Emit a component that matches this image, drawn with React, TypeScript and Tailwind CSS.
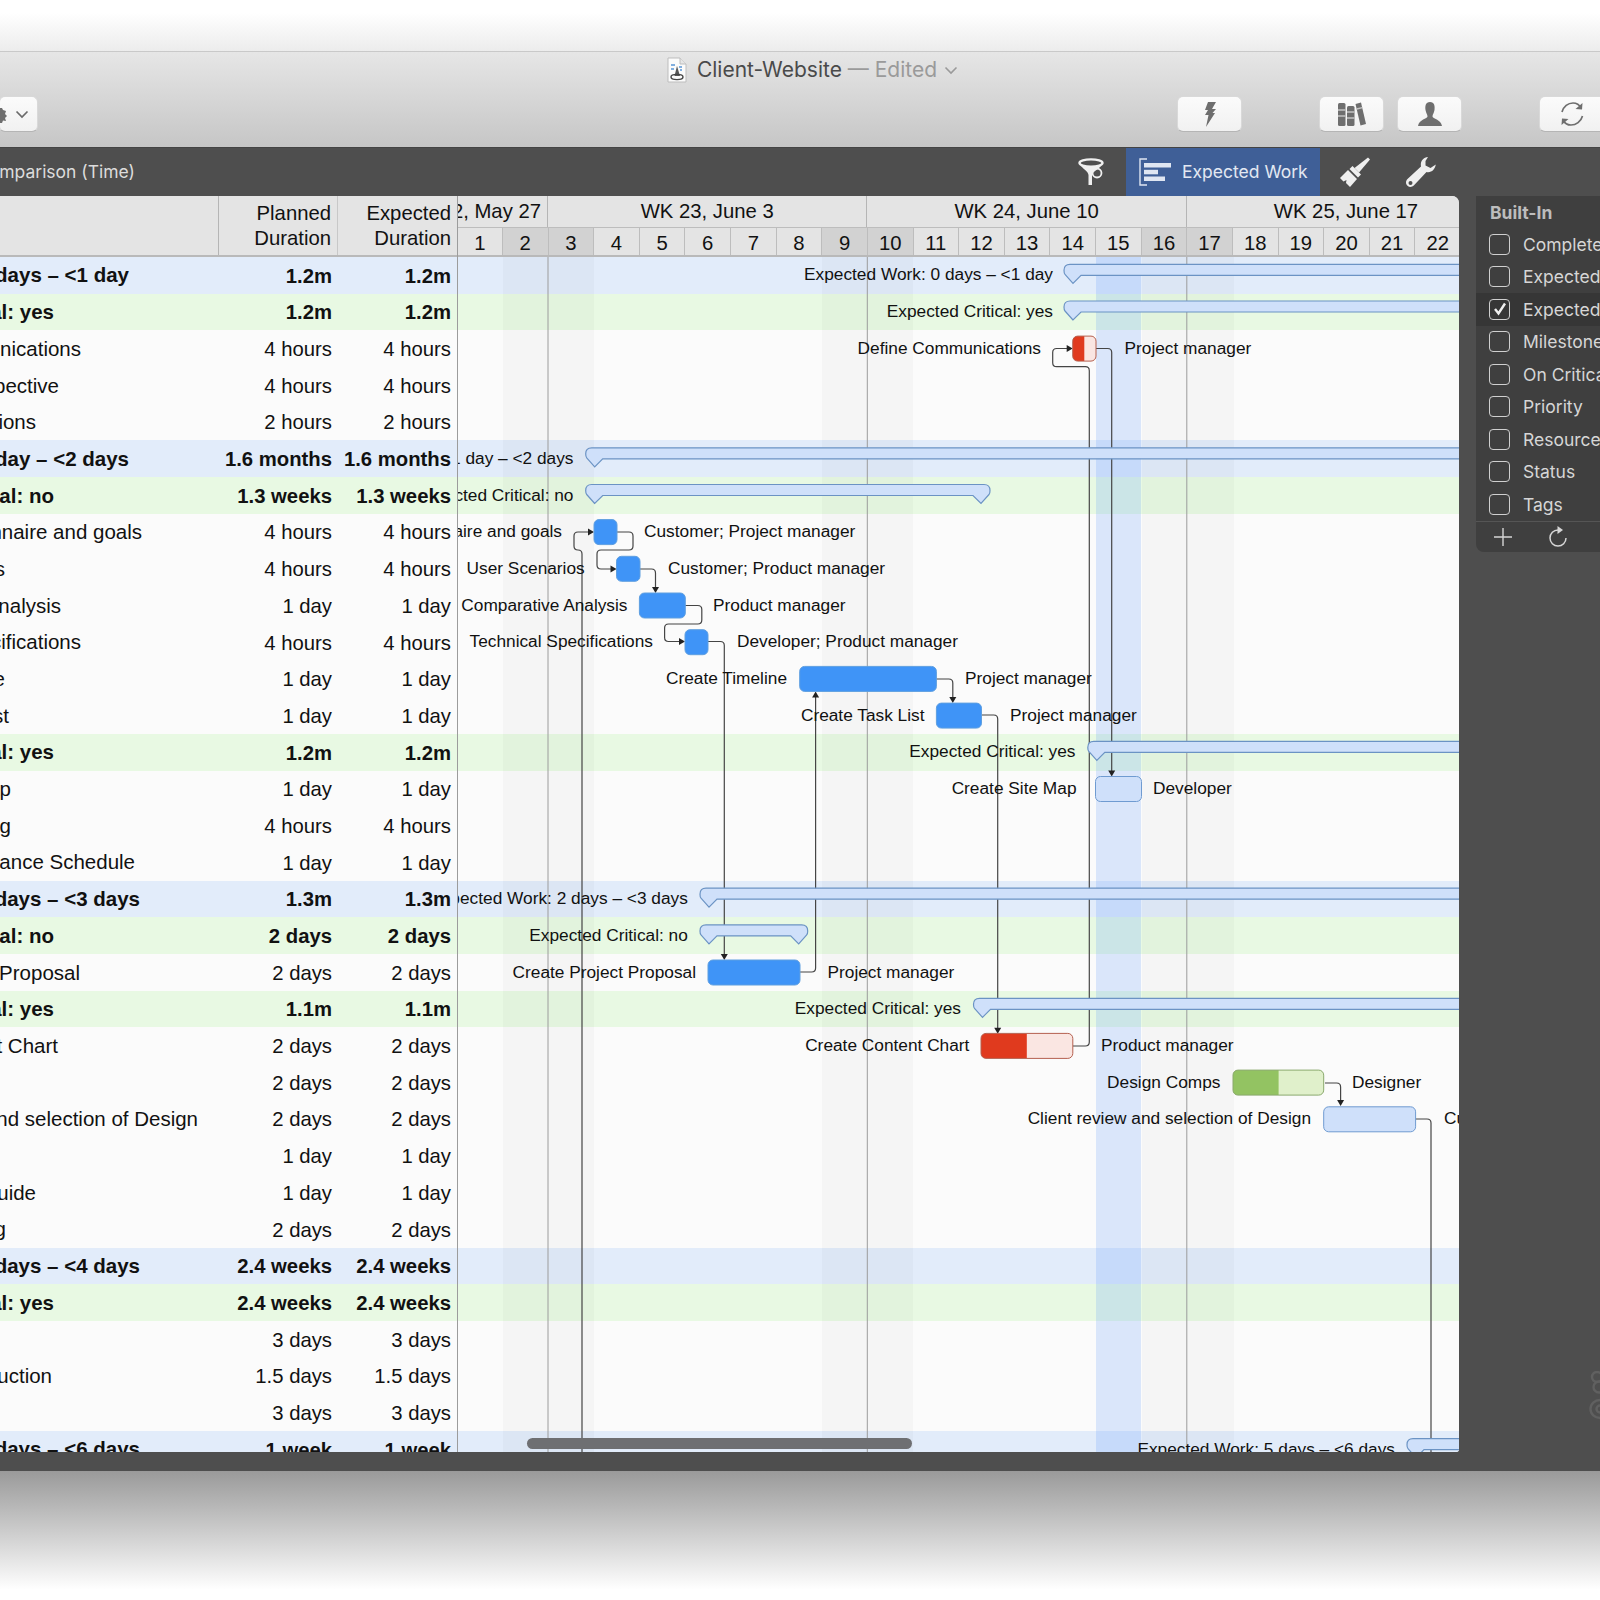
import React from "react";

type Kind = "blue" | "green" | "white";
type Row = { name: string; end: number; dur: string; kind: Kind };

const rows: Row[] = [
  { name: "Expected Work: 0 days – <1 day", end: 129, dur: "1.2m", kind: "blue" },
  { name: "Expected Critical: yes", end: 54, dur: "1.2m", kind: "green" },
  { name: "Define Communications", end: 81, dur: "4 hours", kind: "white" },
  { name: "Client Perspective", end: 59, dur: "4 hours", kind: "white" },
  { name: "Create Definitions", end: 36, dur: "2 hours", kind: "white" },
  { name: "Expected Work: 1 day – <2 days", end: 129, dur: "1.6 months", kind: "blue" },
  { name: "Expected Critical: no", end: 54, dur: "1.3 weeks", kind: "green" },
  { name: "Customer Questionnaire and goals", end: 142, dur: "4 hours", kind: "white" },
  { name: "User Scenarios", end: 5, dur: "4 hours", kind: "white" },
  { name: "Comparative Analysis", end: 61, dur: "1 day", kind: "white" },
  { name: "Technical Specifications", end: 81, dur: "4 hours", kind: "white" },
  { name: "Create Timeline", end: 5, dur: "1 day", kind: "white" },
  { name: "Create Task List", end: 9, dur: "1 day", kind: "white" },
  { name: "Expected Critical: yes", end: 54, dur: "1.2m", kind: "green" },
  { name: "Create Site Map", end: 11, dur: "1 day", kind: "white" },
  { name: "Kickoff Meeting", end: 11, dur: "4 hours", kind: "white" },
  { name: "Create Maintenance Schedule", end: 135, dur: "1 day", kind: "white" },
  { name: "Expected Work: 2 days – <3 days", end: 140, dur: "1.3m", kind: "blue" },
  { name: "Expected Critical: no", end: 54, dur: "2 days", kind: "green" },
  { name: "Create Project Proposal", end: 80, dur: "2 days", kind: "white" },
  { name: "Expected Critical: yes", end: 54, dur: "1.1m", kind: "green" },
  { name: "Create Content Chart", end: 58, dur: "2 days", kind: "white" },
  { name: "", end: 0, dur: "2 days", kind: "white" },
  { name: "Client review and selection of Design", end: 198, dur: "2 days", kind: "white" },
  { name: "", end: 0, dur: "1 day", kind: "white" },
  { name: "Create Style Guide", end: 36, dur: "1 day", kind: "white" },
  { name: "Design Testing", end: 6, dur: "2 days", kind: "white" },
  { name: "Expected Work: 3 days – <4 days", end: 140, dur: "2.4 weeks", kind: "blue" },
  { name: "Expected Critical: yes", end: 54, dur: "2.4 weeks", kind: "green" },
  { name: "", end: 0, dur: "3 days", kind: "white" },
  { name: "Content Production", end: 52, dur: "1.5 days", kind: "white" },
  { name: "", end: 0, dur: "3 days", kind: "white" },
  { name: "Expected Work: 5 days – <6 days", end: 140, dur: "1 week", kind: "blue" },
];

const ROW = 36.7;
const TOP = 257;
const LEFT = 458;
const RIGHT = 1459;
const DAY = 45.63;
const dayX = (n: number) => 548 + (n - 3) * DAY;
const rowBg: Record<Kind, string> = {
  blue: "bg-[#e2ecfa]",
  green: "bg-[#e8f9e3]",
  white: "bg-[#fbfbfb]",
};

const labels: [number, "l" | "r", number, string][] = [
  [0, "r", 1053, "Expected Work: 0 days – <1 day"],
  [1, "r", 1053, "Expected Critical: yes"],
  [2, "r", 1041, "Define Communications"],
  [2, "l", 1124.5, "Project manager"],
  [5, "r", 573.5, "Expected Work: 1 day – <2 days"],
  [6, "r", 573.5, "Expected Critical: no"],
  [7, "r", 562, "Customer Questionnaire and goals"],
  [7, "l", 644, "Customer; Project manager"],
  [8, "r", 584.7, "User Scenarios"],
  [8, "l", 668, "Customer; Product manager"],
  [9, "r", 627.5, "Comparative Analysis"],
  [9, "l", 713, "Product manager"],
  [10, "r", 653, "Technical Specifications"],
  [10, "l", 737, "Developer; Product manager"],
  [11, "r", 787, "Create Timeline"],
  [11, "l", 965, "Project manager"],
  [12, "r", 924.5, "Create Task List"],
  [12, "l", 1010, "Project manager"],
  [13, "r", 1075.5, "Expected Critical: yes"],
  [14, "r", 1076.5, "Create Site Map"],
  [14, "l", 1153, "Developer"],
  [17, "r", 687.8, "Expected Work: 2 days – <3 days"],
  [18, "r", 687.8, "Expected Critical: no"],
  [19, "r", 696, "Create Project Proposal"],
  [19, "l", 827.5, "Project manager"],
  [20, "r", 961, "Expected Critical: yes"],
  [21, "r", 969.4, "Create Content Chart"],
  [21, "l", 1101, "Product manager"],
  [22, "r", 1220.4, "Design Comps"],
  [22, "l", 1352, "Designer"],
  [23, "r", 1311, "Client review and selection of Design"],
  [23, "l", 1444, "Customer"],
  [32, "r", 1395, "Expected Work: 5 days – <6 days"],
];

type Pt = [number, number];
function rounded(pts: Pt[], r = 4) {
  let d = `M${pts[0][0]} ${pts[0][1]}`;
  for (let i = 1; i < pts.length - 1; i++) {
    const [x, y] = pts[i];
    const [px, py] = pts[i - 1];
    const [nx, ny] = pts[i + 1];
    const a = Math.hypot(px - x, py - y);
    const b = Math.hypot(nx - x, ny - y);
    const ra = Math.min(r, a / 2);
    const rb = Math.min(r, b / 2);
    d += ` L${x + ((px - x) / a) * ra} ${y + ((py - y) / a) * ra}`;
    d += ` Q${x} ${y} ${x + ((nx - x) / b) * rb} ${y + ((ny - y) / b) * rb}`;
  }
  const l = pts[pts.length - 1];
  return d + ` L${l[0]} ${l[1]}`;
}

const lines: { pts: Pt[]; tip?: [number, number, "d" | "r" | "u"] }[] = [
  { pts: [[1096, 348.5], [1111.7, 348.5], [1111.7, 771]], tip: [1111.7, 776.5, "d"] },
  { pts: [[1073, 1046], [1089.3, 1046], [1089.3, 366.7], [1052.7, 366.7], [1052.7, 348.5], [1067, 348.5]], tip: [1072.7, 348.5, "r"] },
  { pts: [[617, 532], [633, 532], [633, 550], [597, 550], [597, 569], [611, 569]], tip: [616.5, 569, "r"] },
  { pts: [[640, 569], [655.5, 569], [655.5, 588]], tip: [655.5, 593, "d"] },
  { pts: [[685, 605.5], [701.8, 605.5], [701.8, 624], [664.6, 624], [664.6, 641.5], [680, 641.5]], tip: [685, 641.5, "r"] },
  { pts: [[708, 641.5], [724.3, 641.5], [724.3, 955]], tip: [724.3, 960, "d"] },
  { pts: [[800, 972], [815.6, 972], [815.6, 697]], tip: [815.6, 691.5, "u"] },
  { pts: [[936, 679], [952.8, 679], [952.8, 698]], tip: [952.8, 703, "d"] },
  { pts: [[981.5, 715], [997.7, 715], [997.7, 1029]], tip: [997.7, 1033.7, "d"] },
  { pts: [[1325, 1083], [1340.6, 1083], [1340.6, 1101]], tip: [1340.6, 1106, "d"] },
  { pts: [[1415.6, 1119], [1431, 1119], [1431, 1460]] },
  { pts: [[582, 1460], [582, 550], [574, 550], [574, 532], [589, 532]], tip: [594, 532, "r"] },
];

function tipPath([x, y, dir]: [number, number, "d" | "r" | "u"]) {
  if (dir === "d") return `M${x} ${y} L${x - 3.5} ${y - 6} L${x + 3.5} ${y - 6} Z`;
  if (dir === "u") return `M${x} ${y} L${x - 3.5} ${y + 6} L${x + 3.5} ${y + 6} Z`;
  return `M${x} ${y} L${x - 6} ${y - 3.5} L${x - 6} ${y + 3.5} Z`;
}

const summaries: [number, number, number | null][] = [
  [0, 1064, null],
  [1, 1064, null],
  [5, 585.7, null],
  [6, 585.7, 990],
  [13, 1087.8, null],
  [17, 700, null],
  [18, 700, 807.7],
  [20, 973.5, null],
  [32, 1407, null],
];

function summaryPath(row: number, x0: number, x1: number | null) {
  const t = TOP + row * ROW + 7.3;
  const b = t + 11;
  const tip = t + 19;
  let d = `M${x0 + 9} ${tip} L${x0 + 1} ${b - 1} Q${x0} ${b - 2} ${x0} ${t + 6} Q${x0} ${t} ${x0 + 6} ${t}`;
  if (x1 === null) {
    d += ` L1480 ${t} L1480 ${b} L${x0 + 17} ${b} Z`;
  } else {
    d += ` L${x1 - 6} ${t} Q${x1} ${t} ${x1} ${t + 6} Q${x1} ${b - 2} ${x1 - 1} ${b - 1} L${x1 - 9} ${tip} L${x1 - 17} ${b} L${x0 + 17} ${b} Z`;
  }
  return d;
}

const blue = { fill: "#3f94f7", stroke: "#5f9fe0" };
const pale = { fill: "#cfe0fa", stroke: "#6f9bd1" };
const red = { fill: "#fae6e2", dark: "#e03a1e", stroke: "#b5604f" };
const green = { fill: "#e0f0cb", dark: "#93c362", stroke: "#8aa96d" };

const bars: { row: number; x0: number; x1: number; split?: number; c: { fill: string; stroke: string; dark?: string } }[] = [
  { row: 2, x0: 1072.7, x1: 1096, split: 1084.3, c: red },
  { row: 7, x0: 594, x1: 617, c: blue },
  { row: 8, x0: 616.5, x1: 640, c: blue },
  { row: 9, x0: 639.4, x1: 685.3, c: blue },
  { row: 10, x0: 685, x1: 708, c: blue },
  { row: 11, x0: 799.7, x1: 936.4, c: blue },
  { row: 12, x0: 936.4, x1: 981.5, c: blue },
  { row: 14, x0: 1095.5, x1: 1141.5, c: pale },
  { row: 19, x0: 708, x1: 800, c: blue },
  { row: 21, x0: 981, x1: 1072.8, split: 1026.8, c: red },
  { row: 22, x0: 1233, x1: 1323.7, split: 1278.6, c: green },
  { row: 23, x0: 1323.7, x1: 1415.6, c: pale },
];

const weekends = [
  [503, 594],
  [822, 913],
  [1141.8, 1233.7],
];
const shaded = new Set([2, 3, 9, 10, 16, 17]);
const days = Array.from({ length: 22 }, (_, i) => i + 1);
const panelItems = ["Completed", "Expected Work", "Expected Critical", "Milestone", "On Critical Path", "Priority", "Resource", "Status", "Tags"];

function ToolButton({ className, children }: { className: string; children?: React.ReactNode }) {
  return (
    <div className={`h-[36px] shrink-0 rounded-[6px] bg-linear-to-b from-[#fbfbfb] to-[#f1f1f1] border border-[#d9d9d9] border-b-[#b5b5b5] flex items-center justify-center ${className}`}>
      {children}
    </div>
  );
}

function GanttOverlay() {
  return (
    <svg className="absolute inset-0" width={RIGHT - LEFT} height={1452 - TOP} viewBox={`${LEFT} ${TOP} ${RIGHT - LEFT} ${1452 - TOP}`}>
      <defs>
        {bars.map((b, i) => (
          <clipPath key={i} id={`bar${i}`}>
            <rect x={b.x0} y={TOP + b.row * ROW + 5.7} width={b.x1 - b.x0} height={25} rx={5} />
          </clipPath>
        ))}
      </defs>
      {[548, 867.3, 1186.8].map((x) => (
        <line key={x} x1={x} x2={x} y1={TOP} y2={1452} stroke="#9c9c9c" strokeWidth={1} />
      ))}
      {lines.map((l, i) => (
        <g key={i}>
          <path d={rounded(l.pts)} fill="none" stroke="#454545" strokeWidth={1.2} />
          {l.tip && <path d={tipPath(l.tip)} fill="#222" />}
        </g>
      ))}
      {summaries.map(([r, a, b], i) => (
        <path key={i} d={summaryPath(r, a, b)} fill="#cfe0fa" stroke="#6b93c4" strokeWidth={1.2} />
      ))}
      {bars.map((b, i) => {
        const y = TOP + b.row * ROW + 5.7;
        return (
          <g key={i}>
            <rect x={b.x0} y={y} width={b.x1 - b.x0} height={25} rx={5} fill={b.c.fill} />
            {b.split && b.c.dark && <rect x={b.x0} y={y} width={b.split - b.x0} height={25} fill={b.c.dark} clipPath={`url(#bar${i})`} />}
            <rect x={b.x0} y={y} width={b.x1 - b.x0} height={25} rx={5} fill="none" stroke={b.c.stroke} strokeWidth={1} />
          </g>
        );
      })}
    </svg>
  );
}

export default function App() {
  return (
    <div className="w-[1600px] h-[1600px] overflow-hidden flex flex-col bg-white font-['Liberation_Sans',sans-serif]">
      <div className="h-[51px] shrink-0 bg-linear-to-b from-white from-[25%] to-[#ececec]" />

      <div className="h-[96px] shrink-0 border-t border-[#c9c9c9] bg-linear-to-b from-[#e6e6e6] to-[#c6c6c6] flex flex-col">
        <div className="h-[44px] shrink-0 flex items-center justify-center pl-[25px] pb-[8px] font-['Inter',sans-serif] text-[21px] text-[#4a4a4a] gap-[10px]">
          <svg width="20" height="26" viewBox="0 0 20 26">
            <path d="M1 1 H13 L19 7 V25 H1 Z" fill="#fbfbfb" stroke="#bdbdbd" />
            <path d="M13 1 V7 H19" fill="#e6e6e6" stroke="#bdbdbd" />
            <path d="M4 8 h4 M12 10 h3 M4 12 h3 M13 13 h2" stroke="#5a97d6" strokeWidth="1.5" />
            <path d="M10 9 L7.5 19 H13 Z" fill="#555" />
            <ellipse cx="10" cy="20" rx="6" ry="2.6" fill="none" stroke="#444" strokeWidth="1.4" />
          </svg>
          <div className="flex items-center gap-[7px]">
            <span>
              Client-Website <span className="text-[#9a9a9a]">— Edited</span>
            </span>
            <svg width="14" height="9" viewBox="0 0 14 9">
              <path d="M1.5 1.5 L7 7 L12.5 1.5" fill="none" stroke="#9a9a9a" strokeWidth="1.6" />
            </svg>
          </div>
        </div>
        <div className="flex">
          <ToolButton className="w-[39px] -ml-px justify-end pr-[8px] gap-[10px] relative">
            <svg className="absolute left-0 top-[11px]" width="8" height="15" viewBox="0 0 8 15">
              <path d="M0 0 H2 L3 2 L6 3 L5 6 L7 8 L5 10 L6 13 L3 12.5 L2 15 H0 Z" fill="#6e6e6e" />
            </svg>
            <svg width="14" height="9" viewBox="0 0 14 9">
              <path d="M1.5 1.5 L7 7 L12.5 1.5" fill="none" stroke="#6a6a6a" strokeWidth="1.7" />
            </svg>
          </ToolButton>
          <ToolButton className="w-[65px] ml-[1139px]">
            <svg width="14" height="25" viewBox="0 0 14 25">
              <path d="M5 0 H13 L9 7 H13 L9.5 11 H12 L3 25 L5.5 13 H2 L5 8 H2 Z" fill="#6e6e6e" />
            </svg>
          </ToolButton>
          <ToolButton className="w-[65px] ml-[77px]">
            <svg width="28" height="24" viewBox="0 0 28 24">
              <rect x="0" y="1" width="7.5" height="23" rx="1.5" fill="#6e6e6e" />
              <rect x="9" y="4" width="7.5" height="20" rx="1.5" fill="#6e6e6e" />
              <path d="M17.5 2 L23 0.5 L28 22 L22.5 23.5 Z" fill="#6e6e6e" />
              <path d="M0 8 h7.5 M0 14 h7.5 M9 10 h7.5 M9 16 h7.5 M18.7 7 l5.6 -1.4" stroke="#c4c4c4" strokeWidth="1.4" />
            </svg>
          </ToolButton>
          <ToolButton className="w-[65px] ml-[13px]">
            <svg width="24" height="24" viewBox="0 0 24 24">
              <path d="M12 0 C7.5 0 7 4 7.5 8 C8 11 9.5 12.5 9.5 14.5 C9.5 16.5 1 17.5 0 24 H24 C23 17.5 14.5 16.5 14.5 14.5 C14.5 12.5 16 11 16.5 8 C17 4 16.5 0 12 0 Z" fill="#6e6e6e" />
            </svg>
          </ToolButton>
          <ToolButton className="w-[70px] ml-[77px] justify-start pl-[20px]">
            <svg width="24" height="24" viewBox="0 0 24 24" fill="none" stroke="#6e6e6e" strokeWidth="1.7">
              <path d="M2 10 C3.5 4.5 8 1 13 1 C16.5 1 19.5 3 21 6" />
              <path d="M22.5 14 C21 19.5 16 23 11 23 C7.5 23 4.5 21 3 18" />
              <path d="M22.5 1 L22 7.5 L15.5 7" fill="#6e6e6e" stroke="none" />
              <path d="M1.5 23 L2 16.5 L8.5 17" fill="#6e6e6e" stroke="none" />
            </svg>
          </ToolButton>
        </div>
      </div>

      <div className="h-[49px] shrink-0 bg-[#4e4e4e] border-t border-[#444] flex items-center font-['Inter',sans-serif] text-[17.5px]">
        <div className="w-[135px] shrink-0 flex justify-end whitespace-nowrap text-[#dcdcdc]">
          <span className="shrink-0">Earned Value Comparison (Time)</span>
        </div>
        <svg className="ml-[943px] shrink-0" width="26" height="28" viewBox="0 0 26 28" fill="none">
          <ellipse cx="13" cy="5" rx="11.5" ry="3.6" stroke="#efefef" strokeWidth="2.4" />
          <path d="M3 8 C6 12 10 13 10.5 17 L10.5 27 L14 27 L14 17 C15 13 20 12 23 8 Z" fill="#efefef" />
          <circle cx="19" cy="15" r="4.5" stroke="#efefef" strokeWidth="1.8" />
        </svg>
        <div className="ml-[22px] w-[194px] h-full shrink-0 bg-[#3f5f97] flex items-center pl-[13px] text-[#e3e8f2]">
          <svg width="33" height="28" viewBox="0 0 33 28">
            <path d="M8 1 H1 V27 H8" fill="none" stroke="#dfe6f2" strokeWidth="1.4" />
            <rect x="5" y="5" width="27" height="4.5" fill="#dfe6f2" />
            <rect x="5" y="11.8" width="14" height="4.5" fill="#dfe6f2" />
            <rect x="5" y="18.5" width="21" height="4.5" fill="#dfe6f2" />
          </svg>
          <span className="ml-[10px] whitespace-nowrap">Expected Work</span>
        </div>
        <svg className="ml-[20px] shrink-0" width="30" height="30" viewBox="0 0 30 30">
          <path d="M28 0.5 L30 2.5 L19 15.5 L14.5 11 Z" fill="#efefef" />
          <path d="M12.5 9 L21 17.5 L18 20.5 L9.5 12 Z" fill="#efefef" />
          <path d="M8 13 L17 22 L10 30 L6 26 L6.5 23 L3.5 24.5 L0 21 Z" fill="#efefef" />
        </svg>
        <svg className="ml-[36px] shrink-0" width="30" height="30" viewBox="0 0 30 30">
          <path fillRule="evenodd" d="M22 0 C17 0.5 14 4.5 15 9.5 L1.5 22 C-0.5 24 -0.5 27 1.5 28.7 C3.5 30.5 6 30.2 7.8 28.5 L20.5 15 C25.5 16 29 12.5 29.8 7.5 L24.5 11 L19.5 8.5 L19.5 4 Z M4.5 24 A2 2 0 1 0 4.5 28 A2 2 0 1 0 4.5 24 Z" fill="#efefef" />
        </svg>
      </div>

      <div className="h-[1275px] shrink-0 bg-[#4e4e4e] flex relative">
        <div className="w-[1459px] h-[1256px] shrink-0 flex overflow-hidden rounded-tr-[7px] rounded-br-[3px] bg-[#fbfbfb] text-[20.3px] text-[#111]">
          <div className="w-[458px] shrink-0 flex flex-col border-r border-[#9c9c9c]">
            <div className="h-[61px] shrink-0 flex bg-[#e4e4e4] border-b-2 border-[#b9b9b9] leading-[25px] text-right">
              <div className="w-[219px] border-r border-[#b5b5b5]" />
              <div className="w-[119px] border-r border-[#c8c8c8] flex items-center justify-end pr-[6px]">
                <span>Planned<br />Duration</span>
              </div>
              <div className="flex-1 flex items-center justify-end pr-[6px]">
                <span>Expected<br />Duration</span>
              </div>
            </div>
            <div className="flex-1 overflow-hidden">
              {rows.map((r, i) => (
                <div key={i} className={`h-[36.7px] pt-[1px] grid grid-cols-[219px_119px_119px] items-center ${rowBg[r.kind]} ${r.kind === "white" ? "" : "font-bold"}`}>
                  <div className="overflow-hidden flex text-[20.5px]">
                    <div className="flex justify-end whitespace-nowrap" style={{ width: r.end }}>
                      <span className="shrink-0">{r.name}</span>
                    </div>
                  </div>
                  <div className="text-right pr-[6px] whitespace-nowrap">{r.dur}</div>
                  <div className="text-right pr-[6px] whitespace-nowrap">{r.dur}</div>
                </div>
              ))}
            </div>
          </div>

          <div className="flex-1 min-w-0 flex flex-col">
            <div className="h-[61px] shrink-0 flex flex-col bg-[#e4e4e4] border-b-2 border-[#b9b9b9] overflow-hidden">
              <div className="h-[31px] shrink-0 flex whitespace-nowrap">
                <div className="w-[90px] shrink-0 flex justify-end pr-[6px] items-center overflow-hidden border-r border-[#b5b5b5]">
                  <span className="shrink-0">WK 22, May 27</span>
                </div>
                {["WK 23, June 3", "WK 24, June 10", "WK 25, June 17"].map((w) => (
                  <div key={w} className="w-[319.4px] shrink-0 flex items-center justify-center border-r border-[#b5b5b5]">
                    {w}
                  </div>
                ))}
              </div>
              <div className="flex-1 flex border-t border-[#bdbdbd]">
                {days.map((d) => (
                  <div key={d} className={`${d === 1 ? "w-[44.9px]" : "w-[45.63px]"} shrink-0 flex items-center justify-center border-r border-[#bdbdbd] ${shaded.has(d) ? "bg-[#d2d2d2]" : ""}`}>
                    {d}
                  </div>
                ))}
              </div>
            </div>

            <div className="flex-1 relative overflow-hidden">
              {rows.map((r, i) => (
                <div key={i} className={`h-[36.7px] ${rowBg[r.kind]}`} />
              ))}
              {weekends.map(([a, b]) => (
                <div key={a} className="absolute top-0 bottom-0 bg-[rgba(0,0,0,0.022)]" style={{ left: a - LEFT, width: b - a }} />
              ))}
              <div className="absolute top-0 bottom-0 bg-[rgba(90,150,250,0.2)]" style={{ left: dayX(15) - LEFT, width: DAY }} />
              <GanttOverlay />
              <div className="absolute inset-0 text-[17.3px] overflow-hidden">
                {labels.map(([row, side, x, text], i) => (
                  <div
                    key={i}
                    className="absolute h-[36.7px] flex items-center whitespace-nowrap"
                    style={side === "r" ? { top: row * ROW, right: RIGHT - x } : { top: row * ROW, left: x - LEFT }}
                  >
                    {text}
                  </div>
                ))}
                <div className="absolute left-[69px] top-[1181px] w-[385px] h-[11px] rounded-full bg-[#6e6f72]" />
              </div>
            </div>
          </div>
        </div>

        <div className="ml-[17px] w-[124px] h-[356px] shrink-0 bg-[#3f3f3f] rounded-bl-[8px] overflow-hidden font-['Inter',sans-serif] text-[#d6d6d6] text-[17.5px] flex flex-col">
          <div className="h-[32px] shrink-0 flex items-start pt-[4px] pl-[14px] font-bold text-[#bdbdbd] leading-[26px]">Built-In</div>
          {panelItems.map((p, i) => (
            <div key={i} className={`h-[32.5px] shrink-0 flex items-center pl-[13px] whitespace-nowrap ${i === 2 ? "bg-[#363636]" : ""}`}>
              <div className="w-[21px] h-[21px] shrink-0 rounded-[4px] border-[1.5px] border-[#cfcfcf] flex items-center justify-center">
                {i === 2 && (
                  <svg width="16" height="16" viewBox="0 0 16 16">
                    <path d="M3 8 L6.5 12.5 L13 2.5" fill="none" stroke="#f0f0f0" strokeWidth="2.4" />
                  </svg>
                )}
              </div>
              <span className="ml-[13px] pt-[1px]">{p}</span>
            </div>
          ))}
          <div className="flex-1 border-t border-[#555] flex items-center pl-[17px] gap-[36px]">
            <svg width="20" height="20" viewBox="0 0 20 20">
              <path d="M10 1 V19 M1 10 H19" stroke="#d6d6d6" strokeWidth="1.4" />
            </svg>
            <svg width="18" height="21" viewBox="0 0 18 21" fill="none">
              <path d="M9 4 A8 8 0 1 0 17 12" stroke="#d6d6d6" strokeWidth="1.5" />
              <path d="M8.5 0 L8.5 8 L14 4 Z" fill="#d6d6d6" />
            </svg>
          </div>
        </div>

        <svg className="absolute right-0 top-[1175px]" width="12" height="50" viewBox="0 0 12 50" fill="none" stroke="#606060" strokeWidth="2.4">
          <circle cx="9" cy="6" r="5" />
          <circle cx="11" cy="16" r="5.5" />
          <ellipse cx="12" cy="38" rx="9.5" ry="9" />
          <circle cx="12" cy="38" r="3.5" />
        </svg>
      </div>

      <div className="flex-1 bg-linear-to-b from-[#9a9a9a] to-white to-[92%]" />
    </div>
  );
}
